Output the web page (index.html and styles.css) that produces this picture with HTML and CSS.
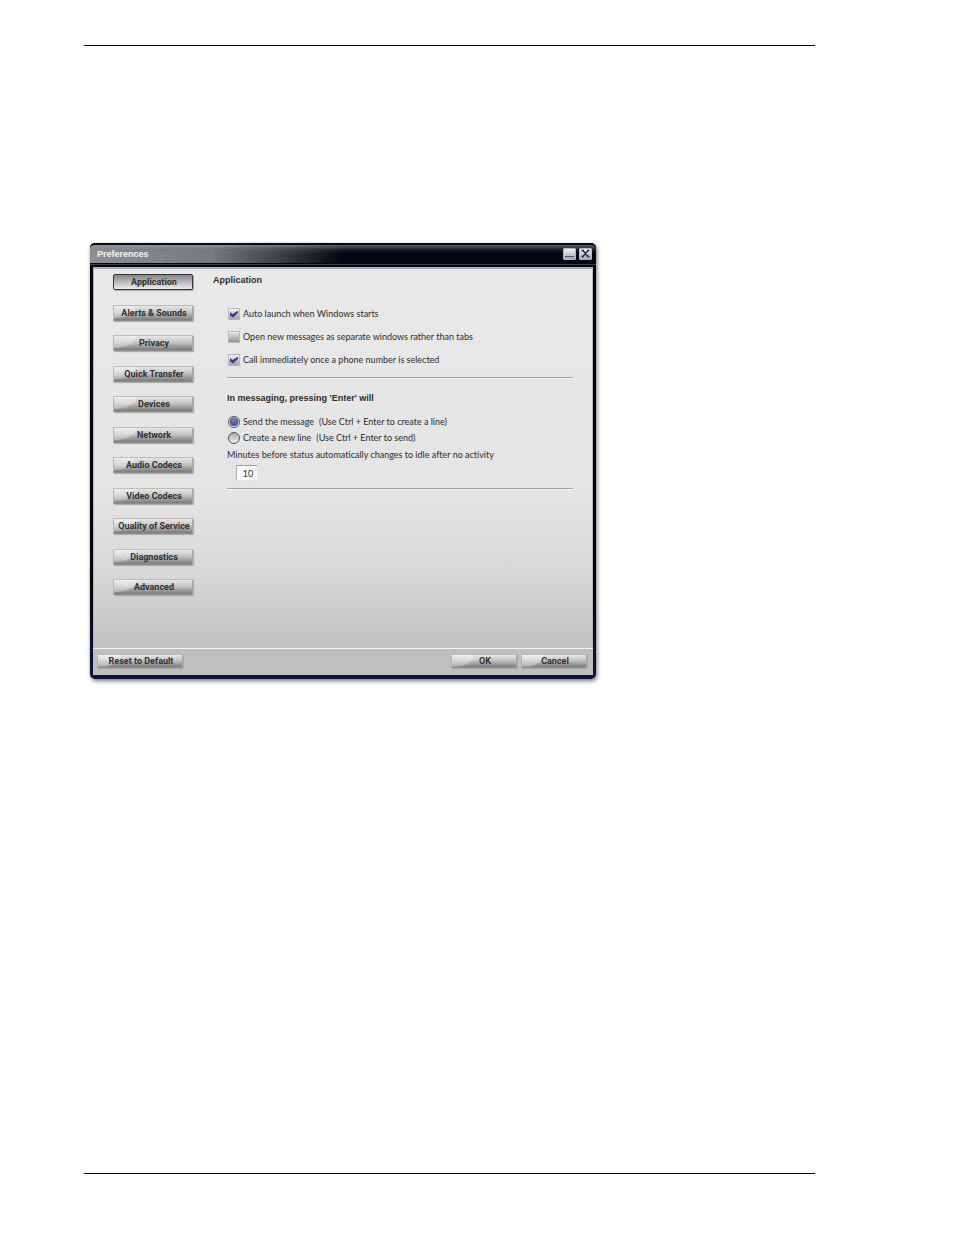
FILE: index.html
```html
<!DOCTYPE html>
<html lang="en">
<head>
    <meta charset="UTF-8">
    <meta name="viewport" content="width=device-width, initial-scale=1.0">
    <title>Preferences</title>
    <link rel="stylesheet" href="styles.css">
</head>
<body>
    <main class="page">
        <form class="window">
            <header class="titlebar">
                <h1>Preferences</h1>
                <div class="window-controls">
                    <button type="button" class="control" aria-label="Minimize">
                        <svg viewBox="0 0 11 10"><path d="M1 7.5h9" stroke="#4a5088"/></svg>
                    </button>
                    <button type="button" class="control" aria-label="Close">
                        <svg viewBox="0 0 11 10"><path d="M3 1.5l5 6M8 1.5l-5 6M1.5 1.5h2.5M7 1.5h2.5M1.5 7.5h2.5M7 7.5h2.5" stroke="#24275f" stroke-width="1.5" fill="none"/></svg>
                    </button>
                </div>
            </header>

            <div class="content">
                <nav class="sidebar">
                    <button type="button" class="btn active">Application</button>
                    <button type="button" class="btn">Alerts &amp; Sounds</button>
                    <button type="button" class="btn">Privacy</button>
                    <button type="button" class="btn">Quick Transfer</button>
                    <button type="button" class="btn">Devices</button>
                    <button type="button" class="btn">Network</button>
                    <button type="button" class="btn">Audio Codecs</button>
                    <button type="button" class="btn">Video Codecs</button>
                    <button type="button" class="btn">Quality of Service</button>
                    <button type="button" class="btn">Diagnostics</button>
                    <button type="button" class="btn">Advanced</button>
                </nav>

                <section class="panel">
                    <h2>Application</h2>

                    <div class="group checks">
                        <label class="option"><input type="checkbox" checked> Auto launch when Windows starts</label>
                        <label class="option"><input type="checkbox"> Open new messages as separate windows rather than tabs</label>
                        <label class="option"><input type="checkbox" checked> Call immediately once a phone number is selected</label>
                    </div>

                    <div class="group messaging">
                        <h3>In messaging, pressing 'Enter' will</h3>
                        <label class="option"><input type="radio" name="enter" checked> <span>Send the message</span> <span class="hint">(Use Ctrl + Enter to create a line)</span></label>
                        <label class="option"><input type="radio" name="enter"> <span>Create a new line</span> <span class="hint">(Use Ctrl + Enter to send)</span></label>
                        <label class="idle-label" for="idle">Minutes before status automatically changes to idle after no activity</label>
                        <input type="text" id="idle" class="idle-input" value="10">
                    </div>
                </section>
            </div>

            <footer class="actions">
                <button type="reset" class="btn reset">Reset to Default</button>
                <button type="button" class="btn">OK</button>
                <button type="button" class="btn">Cancel</button>
            </footer>
        </form>
    </main>
</body>
</html>
```
FILE: styles.css
```css
* {
    margin: 0;
    padding: 0;
    box-sizing: border-box;
}

body {
    display: flex;
    min-height: 100vh;
    padding: 45px 139px 61px 84px;
    background-color: #fff;
    color: #2c2c2c;
    font-family: Lato, Arial, sans-serif;
    font-size: 9px;
    font-variant-ligatures: none;
    line-height: 12px;
}

.page {
    flex: 1;
    padding: 197px 6px;
    border-top: 1px solid #000;
    border-bottom: 1px solid #000;
}

/* window frame */
.window {
    max-width: 506px;
    padding: 0 3px 4px;
    border-radius: 5px;
    background: linear-gradient(#02060e 80%, #0c1444);
    box-shadow: 1px 2px 4px rgba(0, 0, 0, 0.55);
}

.titlebar {
    display: flex;
    align-items: center;
    justify-content: space-between;
    height: 24px;
    margin: 0 -3px;
    padding: 0 4px 5px 7px;
    border-top: 2px solid #080b12;
    border-radius: 5px 5px 0 0;
    background:
        linear-gradient(to top, #02060e 2px, #3a3e46 2px, #3a3e46 3px, #02060e 3px, #02060e 4px, transparent 4px),
        linear-gradient(rgba(150, 154, 162, 0.6), rgba(100, 104, 112, 0.2) 5px, transparent 9px),
        linear-gradient(100deg, #8e9194 0, #777a7d 24%, #3b3e42 38%, #02060e 50%);
}

.titlebar h1 {
    color: #f4f4f4;
    font-family: "Liberation Sans", Arial, sans-serif;
    font-size: 9px;
    font-weight: bold;
}

.window-controls {
    display: flex;
    gap: 3px;
}

.control {
    width: 13px;
    height: 12px;
    border: 1px solid #b4b6bc;
    border-radius: 1px;
    background: linear-gradient(#f2f2f4, #a6a8ae);
}

.control svg {
    display: block;
    width: 100%;
    height: 100%;
}

.content {
    display: flex;
    min-height: 381px;
    border-top: 2px solid #a9adb0;
    border-left: 1px solid #b5b7ba;
    border-right: 1px solid #b5b7ba;
    background: linear-gradient(#e9e9e9, #e4e4e4 60%, #d8d8d8 80%, #c1c1c1);
}

/* buttons */
.btn {
    height: 16px;
    padding-left: 2px;
    border: 1px solid;
    border-color: #bcbcbc #a8a8a8 #8e8e8e #b4b4b4;
    border-radius: 1px;
    background:
        radial-gradient(ellipse 24px 13px at 0 0, rgba(255, 255, 255, 0.35) 85%, transparent),
        linear-gradient(#e6e6e6, #c4c4c4 45%, #a8a8a8 65%, #7c7c7c);
    box-shadow: 1px 1px 1px #a6a6a6;
    color: #303030;
    font-family: Roboto, Arial, sans-serif;
    font-size: 9px;
    font-weight: bold;
    line-height: 12px;
    white-space: nowrap;
}

.btn.active {
    border-color: #33333c;
    border-radius: 2px;
    background: linear-gradient(#858585, #b4b4b4 45%, #ececec);
}

.sidebar {
    display: flex;
    flex-direction: column;
    justify-content: space-between;
    flex: 0 0 99px;
    padding: 5px 0 53px 19px;
}

.panel {
    flex: 1;
    padding: 5px 19px 0 20px;
}

.panel h2,
.panel h3 {
    font-family: "Liberation Sans", Arial, sans-serif;
    font-size: 9px;
    font-weight: bold;
}

/* option groups */
.group {
    display: flex;
    flex-direction: column;
    align-items: flex-start;
    margin-left: 14px;
    border-bottom: 1px solid #a2a2a2;
    box-shadow: 0 1px #f4f4f4;
}

.checks {
    gap: 11px;
    padding: 22px 0 11px;
}

.messaging {
    gap: 4px;
    padding: 14px 0 7px;
}

.messaging h3 {
    margin-bottom: 8px;
}

.option {
    display: flex;
    align-items: center;
    gap: 3px;
    padding-left: 1px;
}

.option input {
    appearance: none;
    display: grid;
    place-items: center;
    width: 12px;
    height: 12px;
}

.option input[type="checkbox"] {
    border: 1px solid #b9b9b9;
    background: linear-gradient(#ededed, #909090);
}

.option input[type="checkbox"]:checked {
    background: linear-gradient(#f2f2f2, #a4a4a8);
}

.option input[type="checkbox"]:checked::before {
    content: "";
    width: 8px;
    height: 7px;
    background: #3c4290;
    clip-path: polygon(0 25%, 35% 50%, 100% 0, 100% 35%, 40% 100%, 0 70%);
}

.option input[type="radio"] {
    border: 1px solid #555;
    border-radius: 50%;
    background: linear-gradient(#a9a9a9, #f0f0f0);
}

.option input[type="radio"]:checked::before {
    content: "";
    width: 8px;
    height: 8px;
    border-radius: 50%;
    background: radial-gradient(circle at 50% 30%, #7e84c2, #2f3478);
}

.hint {
    margin-left: 2px;
}

.idle-label {
    margin-top: 1px;
}

.idle-input {
    width: 22px;
    height: 16px;
    margin-left: 9px;
    padding-left: 2px;
    border: 1px solid;
    border-color: #a0a0a0 #e4e4e4 #e4e4e4 #b0b0b0;
    background-color: #fbfbfb;
    color: #333;
    font-family: inherit;
    font-size: 9px;
    text-align: center;
}

/* bottom bar */
.actions {
    display: flex;
    align-items: center;
    gap: 4px;
    height: 27px;
    padding: 0 6px 2px 4px;
    border-top: 1px solid #f4f4f4;
    background-color: #bfbfbf;
}

.actions .btn {
    width: 66px;
    height: 14px;
}

.actions .reset {
    width: 86px;
    margin-right: auto;
}
```
